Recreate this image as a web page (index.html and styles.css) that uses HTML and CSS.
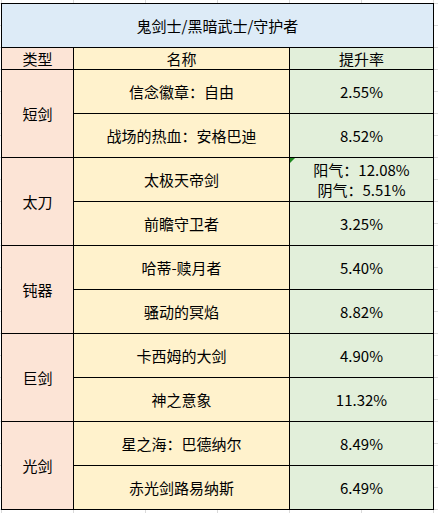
FILE: index.html
```html
<!DOCTYPE html>
<html lang="zh-CN">
<head>
<meta charset="utf-8">
<title>鬼剑士/黑暗武士/守护者</title>
<link rel="stylesheet" href="styles.css">
</head>
<body>
<div class="sheet">
  <div class="cell title">鬼剑士/黑暗武士/守护者</div>

  <div class="cell type">类型</div>
  <div class="cell name">名称</div>
  <div class="cell rate">提升率</div>

  <div class="cell type span2">短剑</div>
  <div class="cell name">信念徽章：自由</div>
  <div class="cell rate">2.55%</div>
  <div class="cell name">战场的热血：安格巴迪</div>
  <div class="cell rate">8.52%</div>

  <div class="cell type span2">太刀</div>
  <div class="cell name">太极天帝剑</div>
  <div class="cell rate multi flagged"><span>阳气：12.08%</span><span>阴气：5.51%</span></div>
  <div class="cell name">前瞻守卫者</div>
  <div class="cell rate">3.25%</div>

  <div class="cell type span2">钝器</div>
  <div class="cell name">哈蒂-赎月者</div>
  <div class="cell rate">5.40%</div>
  <div class="cell name">骚动的冥焰</div>
  <div class="cell rate">8.82%</div>

  <div class="cell type span2">巨剑</div>
  <div class="cell name">卡西姆的大剑</div>
  <div class="cell rate">4.90%</div>
  <div class="cell name">神之意象</div>
  <div class="cell rate">11.32%</div>

  <div class="cell type span2">光剑</div>
  <div class="cell name">星之海：巴德纳尔</div>
  <div class="cell rate">8.49%</div>
  <div class="cell name">赤光剑路易纳斯</div>
  <div class="cell rate">6.49%</div>
</div>
</body>
</html>
```

FILE: styles.css
```css
html, body {
  margin: 0;
  padding: 0;
}

body {
  width: 438px;
  height: 513px;
  overflow: hidden;
  background-color: #ffffff;
  background-image:
    linear-gradient(to right, #dadada 1px, transparent 1px),
    linear-gradient(to bottom, #dadada 1px, transparent 1px);
  background-size: 72px 100%, 100% 22px;
  background-position: 1px 0, 0 3px;
  font-family: "Noto Sans CJK SC", "Microsoft YaHei", sans-serif;
  font-size: 15px;
  color: #000000;
}

.sheet {
  margin: 3px 0 0 1px;
  width: 433px;
  box-sizing: border-box;
  display: grid;
  grid-template-columns: 71px 215px 143px;
  grid-template-rows: 43px 21px repeat(10, 43px);
  gap: 1px;
  padding: 1px;
  background: #000000;
}

.cell {
  display: flex;
  align-items: center;
  justify-content: center;
  text-align: center;
  line-height: 20px;
  white-space: nowrap;
}

.title {
  grid-column: 1 / 4;
  background: #ddebf7;
  padding-top: 1px;
}

.type {
  background: #fce4d6;
}

.name {
  background: #fff2cc;
}

.rate {
  background: #e2efda;
}

.span2 {
  grid-row: span 2;
}

.multi {
  flex-direction: column;
}

.flagged {
  position: relative;
}

.flagged::before {
  content: "";
  position: absolute;
  left: 0;
  top: 0;
  width: 0;
  height: 0;
  border-top: 5px solid #1e8a1e;
  border-right: 5px solid transparent;
}
```
